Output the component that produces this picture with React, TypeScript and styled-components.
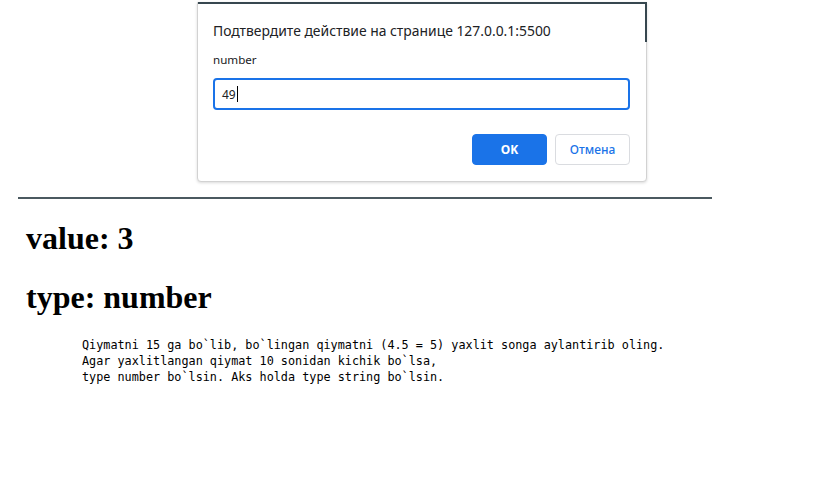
import React from "react";
import styled, { createGlobalStyle } from "styled-components";

const GlobalStyle = createGlobalStyle`
  html, body {
    margin: 0;
    padding: 0;
    background: #fff;
  }
  body {
    font-family: "Liberation Serif", "Times New Roman", serif;
    color: #000;
  }
`;

const Page = styled.div`
  position: relative;
  min-height: 492px;
  padding-top: 197px;
  box-sizing: border-box;
`;

const Rule = styled.div`
  height: 2px;
  width: 694px;
  margin-left: 18px;
  background: #4b5960;
`;

const Heading = styled.h1`
  font-family: "Liberation Serif", "Times New Roman", serif;
  font-size: 32px;
  font-weight: bold;
  margin: 21.44px 0;
  padding-left: 26px;
`;

const Task = styled.pre`
  font-family: "DejaVu Sans Mono", "Liberation Mono", monospace;
  font-size: 11.8px;
  line-height: 16px;
  margin: 21.5px 0 0;
  padding-left: 82px;
  color: #000;
`;

const Dialog = styled.div`
  position: absolute;
  top: 2px;
  left: 197px;
  width: 450px;
  height: 180px;
  box-sizing: border-box;
  background: #fff;
  border: 1px solid #d2d2d2;
  border-radius: 0 0 4px 4px;
  box-shadow: 0 1px 3px rgba(0, 0, 0, 0.15);
  padding: 18px 16px 0 15px;
  font-family: "Noto Sans", "Open Sans", sans-serif;
  color: #202124;
`;

const FrameEdge = styled.div`
  position: absolute;
  top: -1px;
  left: 0;
  right: -1px;
  height: 38px;
  border-top: 2px solid #37474f;
  border-right: 2px solid #37474f;
  pointer-events: none;
`;

const Title = styled.div`
  font-size: 13.9px;
  line-height: 20px;
`;

const Message = styled.div`
  font-size: 11.6px;
  line-height: 16px;
  margin-top: 11px;
`;

const Field = styled.div`
  margin-top: 10px;
  height: 32px;
  box-sizing: border-box;
  border: 2px solid #1a73e8;
  border-radius: 4px;
  display: flex;
  align-items: center;
  padding-left: 7px;
  font-size: 12px;
`;

const Caret = styled.span`
  display: inline-block;
  width: 1px;
  height: 16px;
  background: #000;
  margin-left: 1px;
`;

const Actions = styled.div`
  display: flex;
  justify-content: flex-end;
  gap: 8px;
  margin-top: 24px;
`;

const Button = styled.div<{ $primary?: boolean }>`
  width: 75px;
  height: 31px;
  box-sizing: border-box;
  border-radius: 4px;
  display: flex;
  align-items: center;
  justify-content: center;
  font-size: 12px;
  font-weight: ${(p) => (p.$primary ? "bold" : "500")};
  background: ${(p) => (p.$primary ? "#1a73e8" : "#fff")};
  color: ${(p) => (p.$primary ? "#fff" : "#1a73e8")};
  border: 1px solid ${(p) => (p.$primary ? "#1a73e8" : "#dadce0")};
`;

export default function App() {
  return (
    <>
      <GlobalStyle />
      <Page>
        <Rule />
        <Heading>value: 3</Heading>
        <Heading>type: number</Heading>
        <Task>
          {"Qiymatni 15 ga bo`lib, bo`lingan qiymatni (4.5 = 5) yaxlit songa aylantirib oling.\nAgar yaxlitlangan qiymat 10 sonidan kichik bo`lsa,\ntype number bo`lsin. Aks holda type string bo`lsin."}
        </Task>
        <Dialog>
          <FrameEdge />
          <Title>Подтвердите действие на странице 127.0.0.1:5500</Title>
          <Message>number</Message>
          <Field>
            49
            <Caret />
          </Field>
          <Actions>
            <Button $primary>OK</Button>
            <Button>Отмена</Button>
          </Actions>
        </Dialog>
      </Page>
    </>
  );
}
